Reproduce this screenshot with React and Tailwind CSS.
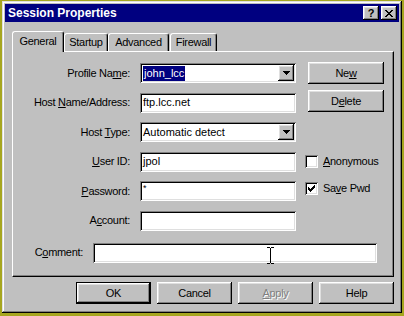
import React from "react";

const RAISED =
  "shadow-[inset_-1px_-1px_#000,inset_1px_1px_#fff,inset_-2px_-2px_#808080,inset_2px_2px_#dfdfdf]";
const SUNKEN =
  "shadow-[inset_1px_1px_#808080,inset_-1px_-1px_#fff,inset_2px_2px_#000,inset_-2px_-2px_#dfdfdf]";

function Field({ children, className = "" }) {
  return (
    <div className={`relative h-[20px] w-[156px] bg-white ${SUNKEN} flex items-center pl-[3px] pr-[2px] tracking-normal ${className}`}>
      {children}
    </div>
  );
}

function Arrow() {
  return (
    <svg width="7" height="4" viewBox="0 0 7 4" className="block">
      <path d="M0 0h7v1H0zM1 1h5v1H1zM2 2h3v1H2zM3 3h1v1H3z" fill="#000" />
    </svg>
  );
}

function Combo({ children }) {
  return (
    <div className={`relative h-[20px] w-[156px] bg-white ${SUNKEN} flex items-center pl-[3px] pr-[2px] tracking-normal`}>
      <div className="flex-1 flex items-center">{children}</div>
      <div className={`w-[16px] h-[16px] bg-[#c0c0c0] ${RAISED} flex items-center justify-center`}>
        <Arrow />
      </div>
    </div>
  );
}

function Label({ children }) {
  return (
    <div className="flex items-center justify-end pr-[10px] h-[20px] text-black">{children}</div>
  );
}

function Btn({ children, className = "", def = false, disabled = false }) {
  return (
    <div
      className={`h-[22px] flex items-center justify-center bg-[#c0c0c0] ${
        def ? "border border-black" : ""
      } ${className}`}
    >
      <div className={`w-full h-full flex items-center justify-center ${RAISED}`}>
        <span
          className={
            disabled ? "text-[#808080] [text-shadow:1px_1px_0_#fff]" : "text-black"
          }
        >
          {children}
        </span>
      </div>
    </div>
  );
}

function Check({ checked }) {
  return (
    <div className={`w-[13px] h-[13px] bg-white ${SUNKEN} flex items-center justify-center`}>
      {checked && (
        <svg width="7" height="7" viewBox="0 0 7 7" className="block">
          <path d="M0 2h1v3H0zM1 3h1v3H1zM2 4h1v3H2zM3 3h1v3H3zM4 2h1v3H4zM5 1h1v3H5zM6 0h1v3H6z" fill="#000" />
        </svg>
      )}
    </div>
  );
}

function Tab({ children, selected, className = "" }) {
  return selected ? (
    <div
      className={`relative z-10 h-[21px] mb-[-1px] bg-[#c0c0c0] border-t border-l border-white border-r border-r-black rounded-t-[3px] shadow-[inset_-1px_0_#808080] flex items-center justify-center pb-[2px] ${className}`}
    >
      {children}
    </div>
  ) : (
    <div
      className={`h-[18px] bg-[#c0c0c0] border-t border-l border-white border-r border-r-black rounded-t-[3px] shadow-[inset_-1px_0_#808080] flex items-center justify-center ${className}`}
    >
      {children}
    </div>
  );
}

export default function App() {
  return (
    <div className="w-[404px] h-[316px] bg-[#a6a620] pt-[1px] pl-[2px] font-['Liberation_Sans',Arial,sans-serif] text-[11px] tracking-[-0.3px] leading-none overflow-hidden">
      <div
        className={`w-[400px] h-[312px] bg-[#c0c0c0] p-[3px] flex flex-col shadow-[inset_-1px_-1px_#000,inset_1px_1px_#dfdfdf,inset_-2px_-2px_#808080,inset_2px_2px_#fff]`}
      >
        {/* Title bar */}
        <div className="h-[18px] bg-[#000080] flex items-center pl-[3px] pr-[2px]">
          <span className="text-white font-bold text-[12px] tracking-[0px] flex-1">
            Session Properties
          </span>
          <div className={`w-[16px] h-[14px] bg-[#c0c0c0] ${RAISED} flex items-center justify-center`}>
            <span className="font-bold text-[11px] text-black tracking-normal">?</span>
          </div>
          <div className={`ml-[2px] w-[16px] h-[14px] bg-[#c0c0c0] ${RAISED} flex items-center justify-center`}>
            <svg width="8" height="7" viewBox="0 0 8 7" className="block">
              <path
                d="M0 0h2v1H0zM6 0h2v1H6zM1 1h2v1H1zM5 1h2v1H5zM2 2h4v1H2zM3 3h2v1H3zM2 4h4v1H2zM1 5h2v1H1zM5 5h2v1H5zM0 6h2v1H0zM6 6h2v1H6z"
                fill="#000"
              />
            </svg>
          </div>
        </div>

        {/* Body */}
        <div className="pl-[7px] pt-[9px] flex flex-col">
          {/* Tabs */}
          <div className="flex items-end h-[20px]">
            <Tab selected className="w-[52px]">General</Tab>
            <Tab className="w-[44px]">Startup</Tab>
            <Tab className="w-[61px]">Advanced</Tab>
            <Tab className="w-[47px] ml-[1px]">Firewall</Tab>
          </div>

          {/* Panel */}
          <div className="w-[382px] h-[226px] border border-t-white border-l-white border-r-black border-b-black shadow-[inset_-1px_-1px_#808080] pt-[11px] flex flex-col">
            <div className="grid grid-cols-[127px_165px_85px] grid-rows-[20px_20px_20px_20px_20px_20px] gap-y-[9.5px]">
              {/* Row 1 */}
              <Label>
                <span>
                  Profile Na<u>m</u>e:
                </span>
              </Label>
              <Combo>
                <span className="bg-[#000080] text-white px-[1px] py-[2px]">john_lcc</span>
              </Combo>
              <Btn className="ml-[3px] w-[76px] mt-[-1px] self-start">
                Ne<u>w</u>
              </Btn>

              {/* Row 2 */}
              <Label>
                <span>
                  Host <u>N</u>ame/Address:
                </span>
              </Label>
              <Field>ftp.lcc.net</Field>
              <Btn className="ml-[3px] w-[76px] mt-[-2.5px] self-start">
                D<u>e</u>lete
              </Btn>

              {/* Row 3 */}
              <Label>
                <span>
                  Host <u>T</u>ype:
                </span>
              </Label>
              <Combo>
                <span>Automatic detect</span>
              </Combo>
              <div />

              {/* Row 4 */}
              <Label>
                <span>
                  <u>U</u>ser ID:
                </span>
              </Label>
              <Field>jpol</Field>
              <div className="flex items-center gap-[5px] h-[20px]">
                <Check />
                <span>
                  <u>A</u>nonymous
                </span>
              </div>

              {/* Row 5 */}
              <Label>
                <span>
                  <u>P</u>assword:
                </span>
              </Label>
              <Field>
                <span className="self-start mt-[3px] text-[9px]">*</span>
              </Field>
              <div className="flex items-center gap-[5px] h-[20px] mt-[-3px]">
                <Check checked />
                <span>
                  Sa<u>v</u>e Pwd
                </span>
              </div>

              {/* Row 6 */}
              <Label>
                <span>
                  A<u>c</u>count:
                </span>
              </Label>
              <Field />
              <div />
            </div>

            {/* Comment */}
            <div className="flex items-center mt-[12px]">
              <div className="w-[80px] flex justify-end pr-[10px]">
                <span>
                  C<u>o</u>mment:
                </span>
              </div>
              <Field className="w-[284px]">
                <svg
                  width="7"
                  height="17"
                  viewBox="0 0 7 17"
                  className="absolute left-[174px] top-[4px]"
                >
                  <path d="M0 0h3v1H0zM4 0h3v1H4zM3 1h1v15H3zM0 16h3v1H0zM4 16h3v1H4z" fill="#000" />
                </svg>
              </Field>
            </div>
          </div>

          {/* Bottom buttons */}
          <div className="w-[382px] flex justify-end gap-[6px] mt-[5px]">
            <Btn def className="w-[75px]">OK</Btn>
            <Btn className="w-[75px]">Cancel</Btn>
            <Btn disabled className="w-[75px]">
              <u>A</u>pply
            </Btn>
            <Btn className="w-[75px]">Help</Btn>
          </div>
        </div>
      </div>
    </div>
  );
}
